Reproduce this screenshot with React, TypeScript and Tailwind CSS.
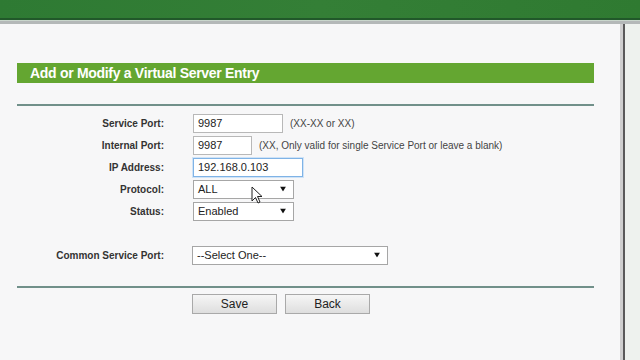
import React from "react";

const Arrow = () => (
  <svg width="6" height="5" viewBox="0 0 6 5" className="absolute right-[7px] top-1/2 -translate-y-1/2">
    <path d="M0 0 L6 0 L3 5 Z" fill="#111" />
  </svg>
);

function Select({ value, w }: { value: string; w: string }) {
  return (
    <div className={`relative h-[19px] ${w} border border-[#a6a6a6] bg-white flex items-center pl-[4px] text-[11px] text-[#222]`}>
      {value}
      <Arrow />
    </div>
  );
}

function Input({ value, w, focus }: { value: string; w: string; focus?: boolean }) {
  return (
    <div
      className={`h-[19px] ${w} border ${focus ? "border-[#7fb3e6] shadow-[0_0_0_1px_#cfe3f7]" : "border-[#b8b8b8]"} bg-white flex items-center pl-[4px] text-[11px] text-[#222]`}
    >
      {value}
    </div>
  );
}

function Row({ label, children }: { label: string; children: React.ReactNode }) {
  return (
    <div className="flex items-center h-[22px]">
      <div className="w-[147px] text-right font-bold text-[10px] text-[#333]">{label}</div>
      <div className="ml-[29px] flex items-center">{children}</div>
    </div>
  );
}

export default function App() {
  return (
    <div className="w-[640px] h-[360px] overflow-hidden bg-[#f7f7f8] relative" style={{ fontFamily: '"Liberation Sans", Arial, sans-serif' }}>
      <div className="h-[18px] bg-gradient-to-r from-[#2e7a33] via-[#347f36] to-[#2f7a31]" />
      <div className="h-[2px] bg-[#21582a]" />
      <div className="h-[1px] bg-[#c9d6cc]" />
      <div className="h-[3px] bg-[#b4b8b8]" />
      <div className="flex h-[336px]">
        <div className="w-[620px] bg-[#f7f7f8] pl-[17px] pr-[26px] pt-[39px]">
          <div className="h-[20px] bg-[#64a631] flex items-center pl-[13px] text-white font-bold text-[14px] tracking-[-0.3px]">
            Add or Modify a Virtual Server Entry
          </div>
          <div className="mt-[21px] h-[2px] bg-[#71908a]" />
          <div className="mt-[6px] text-[10px]">
            <Row label="Service Port:">
              <Input value="9987" w="w-[90px]" />
              <span className="ml-[7px] text-[10px] text-[#444]">(XX-XX or XX)</span>
            </Row>
            <Row label="Internal Port:">
              <Input value="9987" w="w-[59px]" />
              <span className="ml-[7px] text-[10px] text-[#444]">(XX, Only valid for single Service Port or leave a blank)</span>
            </Row>
            <Row label="IP Address:">
              <Input value="192.168.0.103" w="w-[110px]" focus />
            </Row>
            <Row label="Protocol:">
              <Select value="ALL" w="w-[101px]" />
            </Row>
            <Row label="Status:">
              <Select value="Enabled" w="w-[101px]" />
            </Row>
            <div className="mt-[22px]">
              <Row label="Common Service Port:">
                <div className="-ml-[1px]">
                  <Select value="--Select One--" w="w-[196px]" />
                </div>
              </Row>
            </div>
          </div>
          <div className="mt-[20px] h-[2px] bg-[#71908a]" />
          <div className="mt-[6px] flex pl-[175px] gap-[8px]">
            <button className="w-[85px] h-[20px] border border-[#a9a9a9] bg-gradient-to-b from-[#f6f6f6] to-[#dedede] text-[12px] text-[#222]">Save</button>
            <button className="w-[85px] h-[20px] border border-[#a9a9a9] bg-gradient-to-b from-[#f6f6f6] to-[#dedede] text-[12px] text-[#222]">Back</button>
          </div>
        </div>
        <div className="w-[3px] bg-[#cfcfcf]" />
        <div className="w-[2px] bg-[#5a5a5a]" />
        <div className="flex-1 bg-[#eef2ee]" />
      </div>
      <svg className="absolute left-[251px] top-[186px]" width="12" height="19" viewBox="0 0 12 19">
        <path d="M1 1 L1 15 L4.5 11.5 L7 17 L9 16 L6.5 10.5 L11 10.5 Z" fill="white" stroke="#222" strokeWidth="1" strokeLinejoin="round" />
      </svg>
    </div>
  );
}
